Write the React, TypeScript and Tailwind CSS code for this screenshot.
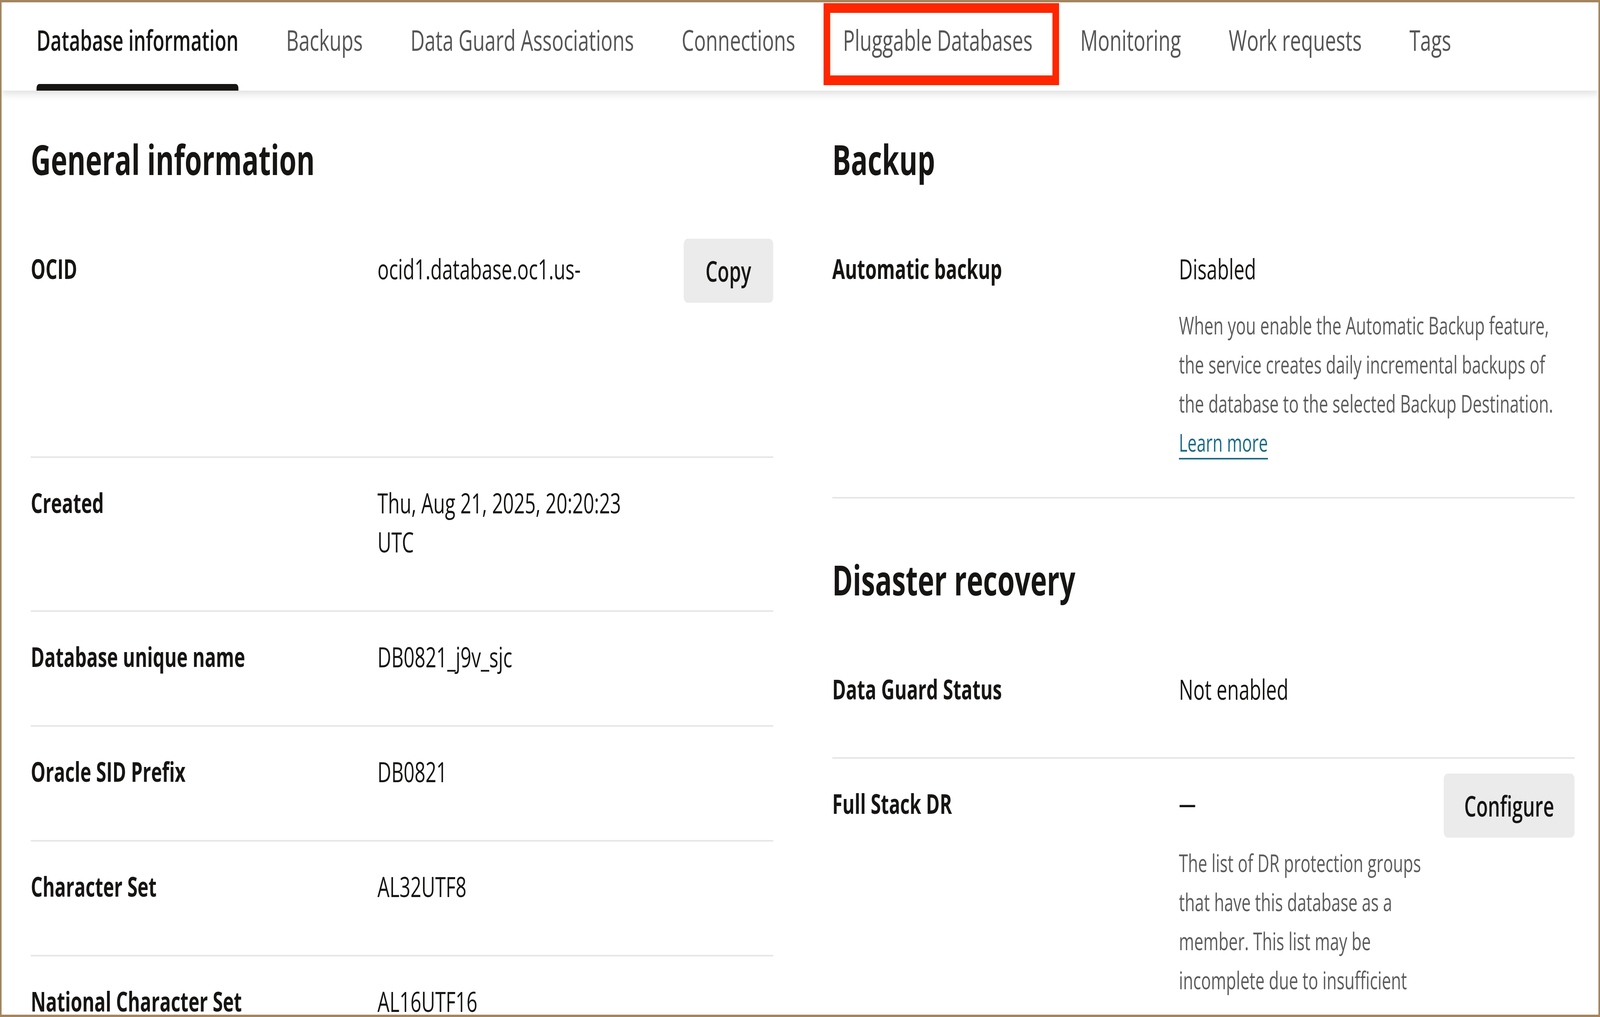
import { useEffect, useState } from "react";
import type { ReactNode } from "react";
import clsx from "clsx";

const PAGE_W = 6040;
const PAGE_H = 2603;

const tabs = [
  "Database information",
  "Backups",
  "Data Guard Associations",
  "Connections",
  "Pluggable Databases",
  "Monitoring",
  "Work requests",
  "Tags",
];

function Row({
  label,
  children,
  action,
  className,
}: {
  label: string;
  children: ReactNode;
  action?: string;
  className?: string;
}) {
  return (
    <div className={clsx("grid grid-cols-[1309px_1fr_auto] items-start pt-[64px]", className)}>
      <div className="text-[70px] font-bold leading-[100px] text-[#161513]">{label}</div>
      <div className="text-[72px] leading-[100px] text-[#161513]">{children}</div>
      {action && (
        <button
          className={clsx(
            "-mt-[26px] h-[164px] rounded-[15px] bg-[#ebebeb] text-[72px] font-semibold leading-[100px] text-[#161513]",
            action === "Copy" ? "w-[338px]" : "w-[494px]"
          )}
        >
          {action}
        </button>
      )}
    </div>
  );
}

function Heading({ children, className }: { children: ReactNode; className?: string }) {
  return (
    <h2 className={clsx("mb-[103px] text-[105px] font-bold leading-[125px] text-[#161513]", className)}>
      {children}
    </h2>
  );
}

export default function App() {
  // the window may come out smaller than the page was drawn for, so fit it
  const [fit, setFit] = useState(() => ({
    x: window.innerWidth / PAGE_W,
    y: window.innerHeight / PAGE_H,
  }));

  useEffect(() => {
    const onResize = () => setFit({ x: window.innerWidth / PAGE_W, y: window.innerHeight / PAGE_H });
    onResize();
    window.addEventListener("resize", onResize);
    return () => window.removeEventListener("resize", onResize);
  }, []);

  return (
    <div className="h-screen w-screen overflow-hidden bg-white">
      <div
        className="relative h-[2603px] w-[6040px] origin-top-left overflow-hidden border-[6px] border-[#a3865f] bg-white font-['Open_Sans','Noto_Sans',sans-serif]"
        style={{ transform: `scale(${fit.x}, ${fit.y})` }}
      >
        {/* tab strip */}
        <div className="relative z-10 flex bg-white pl-[114px] shadow-[0_8px_22px_rgba(0,0,0,0.13)]">
          <div className="flex gap-[144px]">
            {tabs.map((t, i) => (
              <div key={t} className="relative flex flex-col px-[18px]">
                <span
                  className={clsx(
                    "whitespace-nowrap pb-[63px] pt-[46px] leading-[100px]",
                    i === 0 ? "text-[72px] font-semibold text-[#161513]" : "text-[74px] font-medium text-[#555555]"
                  )}
                >
                  {t}
                </span>
                <div className={clsx("h-[17px] rounded-t-[10px]", i === 0 && "bg-[#161513]")} />
                {t === "Pluggable Databases" && (
                  <div className="absolute left-[-55px] right-[-82px] top-[2px] h-[210px] border-[25px] border-[#ff2600]" />
                )}
              </div>
            ))}
          </div>
        </div>

        <div className="grid grid-cols-2 gap-x-[223px] pl-[110px] pr-[90px] pt-[113px]">
          {/* left column */}
          <div>
            <Heading>General information</Heading>
            <Row label="OCID" action="Copy" className="min-h-[595px]">
              ocid1.database.oc1.us-
            </Row>
            <Row label="Created" className="border-t-[4px] border-[#e6e6e6] pb-[126px]">
              Thu, Aug 21, 2025, 20:20:23
              <br />
              UTC
            </Row>
            <Row label="Database unique name" className="border-t-[4px] border-[#e6e6e6] pb-[126px]">
              DB0821_j9v_sjc
            </Row>
            <Row label="Oracle SID Prefix" className="border-t-[4px] border-[#e6e6e6] pb-[126px]">
              DB0821
            </Row>
            <Row label="Character Set" className="border-t-[4px] border-[#e6e6e6] pb-[126px]">
              AL32UTF8
            </Row>
            <Row label="National Character Set" className="border-t-[4px] border-[#e6e6e6] pb-[126px]">
              AL16UTF16
            </Row>
          </div>

          {/* right column */}
          <div>
            <Heading>Backup</Heading>
            <Row label="Automatic backup" className="border-b-[4px] border-[#e6e6e6] pb-[90px]">
              <div>Disabled</div>
              <p className="mt-[45px] whitespace-nowrap text-[62px] leading-[100px] text-[#5c5c5c]">
                When you enable the Automatic Backup feature,
                <br />
                the service creates daily incremental backups of
                <br />
                the database to the selected Backup Destination.
                <br />
                <a className="text-[#1b6b88] underline decoration-[4px] underline-offset-[16px]">Learn more</a>
              </p>
            </Row>

            <Heading className="mt-[145px]">Disaster recovery</Heading>
            <Row label="Data Guard Status" className="pb-[125px]">
              Not enabled
            </Row>
            <Row label="Full Stack DR" action="Configure" className="border-t-[4px] border-[#e6e6e6] pb-[125px]">
              <div className="text-[64px] font-semibold">—</div>
              <p className="mt-[52px] whitespace-nowrap text-[62px] leading-[100px] text-[#5c5c5c]">
                The list of DR protection groups
                <br />
                that have this database as a
                <br />
                member. This list may be
                <br />
                incomplete due to insufficient
              </p>
            </Row>
          </div>
        </div>
      </div>
    </div>
  );
}
